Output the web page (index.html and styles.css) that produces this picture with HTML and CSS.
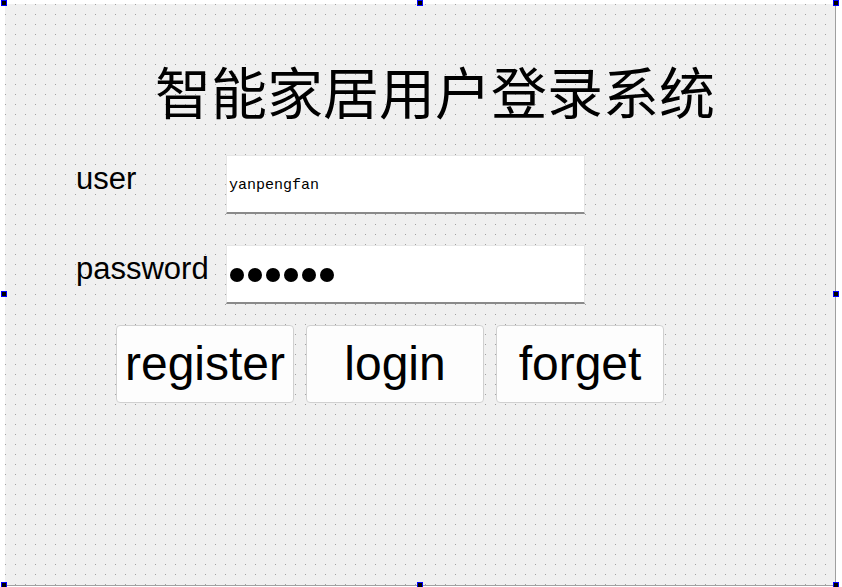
FILE: index.html
```html
<!DOCTYPE html>
<html lang="zh-CN">
<head>
<meta charset="utf-8">
<title>智能家居用户登录系统</title>
<link rel="stylesheet" href="styles.css">
</head>
<body>
<div class="stage">
  <div class="canvas">
    <h1 class="title">智能家居用户登录系统</h1>
    <div class="row">
      <label class="label">user</label>
      <div class="input"><span class="text">yanpengfan</span></div>
    </div>
    <div class="row row-pass">
      <label class="label">password</label>
      <div class="input">
        <span class="dots"><i></i><i></i><i></i><i></i><i></i><i></i></span>
      </div>
    </div>
    <div class="buttons">
      <button class="btn">register</button>
      <button class="btn">login</button>
      <button class="btn btn-narrow">forget</button>
    </div>
  </div>
  <span class="handle h-tl"></span>
  <span class="handle h-tm"></span>
  <span class="handle h-tr"></span>
  <span class="handle h-ml"></span>
  <span class="handle h-mr"></span>
  <span class="handle h-bl"></span>
  <span class="handle h-bm"></span>
  <span class="handle h-br"></span>
</div>
</body>
</html>
```
FILE: styles.css
```css
html, body {
  margin: 0;
  padding: 0;
  background: #ffffff;
}

.stage {
  position: relative;
  width: 842px;
  height: 587px;
  overflow: hidden;
}

.canvas {
  margin: 4px 0 0 5px;
  width: 830px;
  height: 581px;
  border-right: 1px solid #a0a0a0;
  border-bottom: 1px solid #a0a0a0;
  background-color: #f0f0f0;
  background-image: conic-gradient(from 270deg at 1px 1px, #a0a0a0 90deg, transparent 0);
  background-size: 10px 10px;
  display: flex;
  flex-direction: column;
}

.title {
  margin: 58px 0 0 150px;
  font-family: "Noto Sans CJK SC", sans-serif;
  font-weight: 400;
  font-size: 56px;
  line-height: 56px;
  height: 56px;
  color: #000;
  white-space: nowrap;
}

.row {
  display: flex;
  align-items: center;
  height: 59px;
  margin-top: 37px;
  padding-left: 71px;
}

.row-pass {
  margin-top: 31px;
}

.label {
  width: 150px;
  font-family: "Liberation Sans", Arial, sans-serif;
  font-size: 31px;
  color: #000;
  padding-bottom: 12px;
}

.input {
  box-sizing: border-box;
  width: 359px;
  height: 59px;
  background: #ffffff;
  border: 1px solid #e6e6e6;
  border-bottom: 2px solid #8a8a8a;
  display: flex;
  align-items: center;
  padding-left: 2px;
}

.text {
  font-family: "Liberation Mono", "Courier New", monospace;
  font-size: 15px;
  color: #000;
  padding-top: 2px;
}

.dots {
  display: flex;
  gap: 4px;
  padding-left: 1px;
  padding-top: 1px;
}

.dots i {
  display: block;
  width: 14px;
  height: 14px;
  border-radius: 50%;
  background: #000;
}

.buttons {
  display: flex;
  gap: 12px;
  margin-top: 21px;
  padding-left: 111px;
}

.btn {
  box-sizing: border-box;
  width: 178px;
  height: 78px;
  background: #fdfdfd;
  border: 1px solid #d0d0d0;
  border-radius: 4px;
  font-family: "Liberation Sans", Arial, sans-serif;
  font-size: 48px;
  color: #000;
  padding: 0 0 2px 0;
  margin: 0;
}

.btn-narrow {
  width: 168px;
}

.handle {
  position: absolute;
  box-sizing: border-box;
  width: 6px;
  height: 6px;
  background: #000;
  border: 1px solid #0000ff;
}

.h-tl { left: 1px; top: 0; }
.h-tm { left: 417px; top: 0; }
.h-tr { left: 833px; top: 0; }
.h-ml { left: 1px; top: 291px; }
.h-mr { left: 833px; top: 291px; }
.h-bl { left: 1px; top: 582px; }
.h-bm { left: 417px; top: 582px; }
.h-br { left: 833px; top: 582px; }
```
